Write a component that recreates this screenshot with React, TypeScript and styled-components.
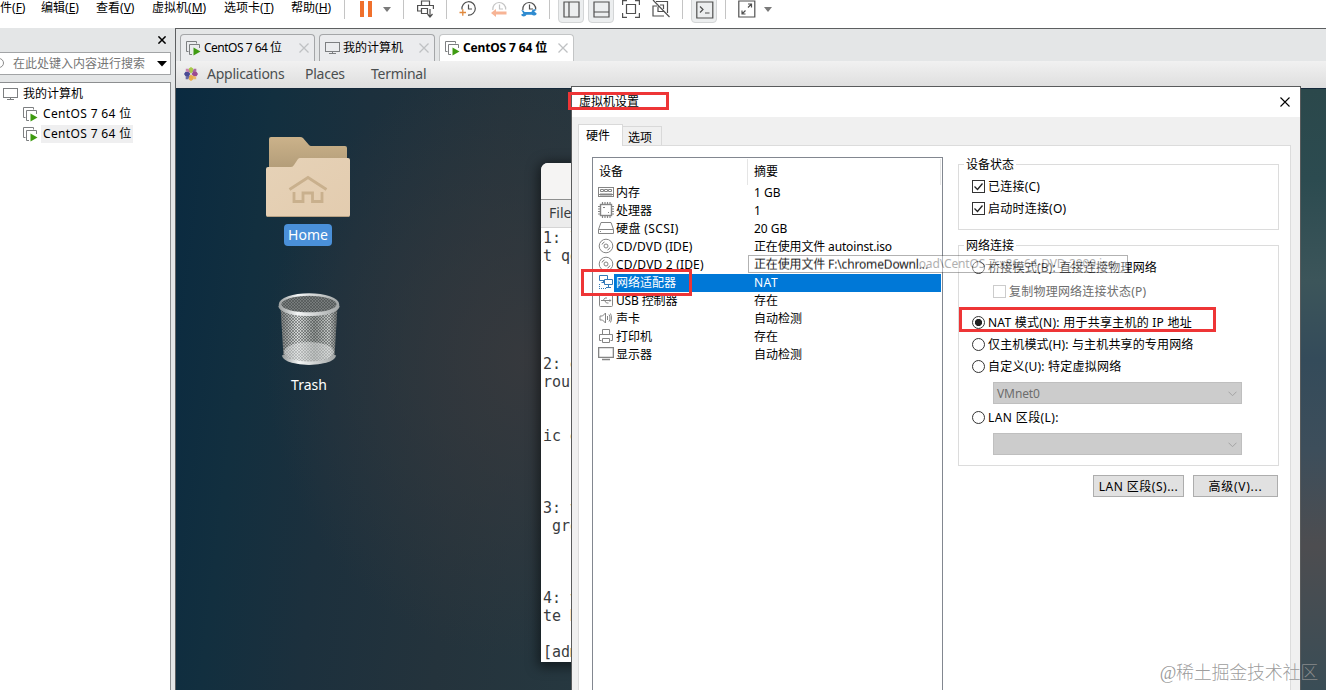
import React from "react";
import styled, { createGlobalStyle, css } from "styled-components";

const Global = createGlobalStyle`
  * { box-sizing: border-box; }
  body { margin: 0; background: #fff; overflow: hidden; }
  svg { display: block; flex: none; }
`;

const ui = `"Noto Sans", "Noto Sans CJK SC", sans-serif`;

const Screen = styled.div`
  position: relative;
  width: 1326px;
  height: 690px;
  overflow: hidden;
  display: flex;
  flex-direction: column;
  font: 12px/18px ${ui};
  color: #000;
  white-space: nowrap;
`;

const Fit = styled.span<{ $w?: number; $ls?: number }>`
  display: inline-block;
  flex: none;
  white-space: pre;
  ${(p) => p.$w && css`width: ${p.$w}px;`}
  letter-spacing: ${(p) => p.$ls ?? 0}px;
`;

/* ---------- top bar ---------- */
const TopBar = styled.header`
  height: 28px;
  flex: none;
  display: flex;
  background: #fff;
`;
const Menu = styled.nav`
  display: flex;
  gap: 16px;
  width: 331px;
  height: 16px;
  line-height: 16px;
  flex: none;
`;
const Tools = styled.div`
  display: flex;
  align-items: center;
  height: 18px;
`;
const Slot = styled.div<{ $ml: number }>`
  margin-left: ${(p) => p.$ml}px;
  flex: none;
`;
const Sep = styled.i<{ $ml: number }>`
  margin-left: ${(p) => p.$ml}px;
  width: 1px;
  height: 20px;
  background: #c4c4c4;
  flex: none;
`;
const Toggle = styled.div<{ $ml: number }>`
  margin: -8px 0 -5px ${(p) => p.$ml}px;
  width: 26px;
  height: 31px;
  padding: 8px 0 0 4px;
  border: 1px solid #d3d5d6;
  border-radius: 4px;
  background: #eceeef;
  flex: none;
`;

/* ---------- body ---------- */
const Body = styled.div`
  flex: 1;
  display: flex;
  min-height: 0;
  background: #e4e6e7;
`;
const Sidebar = styled.aside`
  width: 171px;
  margin-right: 4px;
  flex: none;
  display: flex;
  flex-direction: column;
`;
const SideHead = styled.div`
  height: 24px;
  display: flex;
  justify-content: flex-end;
  align-items: center;
  padding-right: 5px;
  flex: none;
`;
const Search = styled.div`
  height: 23px;
  border: 1px solid #a2a4a6;
  border-left: 0;
  background: #fff;
  display: flex;
  align-items: center;
  color: #757575;
  padding-right: 3px;
  flex: none;
  overflow: hidden;
`;
const SearchText = styled.span`
  margin-left: 8px;
  flex: 1;
`;
const Tree = styled.div`
  flex: 1;
  margin-top: 7px;
  padding-top: 1px;
  border: 1px solid #8c8e90;
  border-left: 0;
  border-bottom: 0;
  background: #fff;
`;
const TreeRow = styled.div<{ $indent: number }>`
  height: 20px;
  display: flex;
  align-items: center;
  gap: 3px;
  padding-left: ${(p) => p.$indent}px;
`;
const TreeLabel = styled.span<{ $hot?: boolean }>`
  padding: 0 1px 0 2px;
  height: 18px;
  background: ${(p) => (p.$hot ? "#efeff0" : "transparent")};
`;

const Console = styled.main`
  flex: 1;
  min-width: 0;
  border-top: 1px solid #5d5f61;
  border-left: 1px solid #5d5f61;
  display: flex;
  flex-direction: column;
`;
const Tabs = styled.div`
  height: 32px;
  padding: 5px 0 0 4px;
  display: flex;
  gap: 4px;
  flex: none;
`;
const Tab = styled.div<{ $w: number; $on?: boolean }>`
  width: ${(p) => p.$w}px;
  height: 27px;
  border: 1px solid ${(p) => (p.$on ? "#c3c5c6" : "#a4a6a8")};
  border-bottom: 0;
  border-radius: 4px 4px 0 0;
  background: ${(p) => (p.$on ? "#fff" : "#ebecee")};
  font-weight: ${(p) => (p.$on ? 700 : 400)};
  display: flex;
  align-items: center;
  gap: 3px;
  padding: 0 5px 0 5px;
`;
const TabText = styled.span<{ $ls: number }>`
  flex: 1;
  letter-spacing: ${(p) => p.$ls}px;
`;
const GuestBar = styled.div`
  height: 27px;
  flex: none;
  display: flex;
  align-items: center;
  padding: 0 0 2px 8px;
  background: linear-gradient(#f1f1f1, #dedede);
  font-size: 14px;
  color: #4b4f50;
`;
const GuestItem = styled.span<{ $w?: number; $ml?: number }>`
  flex: none;
  width: ${(p) => (p.$w ? p.$w + "px" : "auto")};
  margin-left: ${(p) => p.$ml ?? 0}px;
  letter-spacing: -0.25px;
`;
const Desktop = styled.div`
  position: relative;
  flex: 1;
  border-top: 1px solid #14283a;
  background:
    linear-gradient(180deg, #2b484b 0, #2c4b50 15%, #3c555a 32%, #344b5a 45%, #3d4e5b 60%, #4d4d50 76%, #3a4d56 100%) right / 30px 100% no-repeat,
    radial-gradient(ellipse 260px 300px at 350px 270px, rgba(55, 57, 61, 0.95), rgba(52, 56, 60, 0)),
    linear-gradient(97deg, #0a2a40 0%, #122f3f 8%, #1c303d 16%, #24333c 27%, #2a4046 60%, #36505a 100%);
`;
const DeskIcon = styled.div<{ $x: number; $y: number; $gap: number }>`
  position: absolute;
  left: ${(p) => p.$x}px;
  top: ${(p) => p.$y}px;
  width: 100px;
  display: flex;
  flex-direction: column;
  align-items: center;
  gap: ${(p) => p.$gap}px;
`;
const DeskLabel = styled.span<{ $on?: boolean }>`
  height: 22px;
  padding: 0 4px 0 4px;
  border-radius: 4px;
  font-size: 14px;
  line-height: 21px;
  color: #fff;
  background: ${(p) => (p.$on ? "#4a90d9" : "transparent")};
`;
const Terminal = styled.section`
  position: absolute;
  left: 365px;
  top: 74px;
  width: 60px;
  height: 499px;
  background: #fff;
  border-radius: 7px 0 0 0;
  overflow: hidden;
  box-shadow: 0 2px 12px 3px rgba(0, 0, 0, 0.5);
  color: #3a3d3f;
`;
const TermTitle = styled.div`
  height: 37px;
  background: #f5f4f3;
  border-bottom: 1px solid #8e8f8f;
`;
const TermMenu = styled.div`
  height: 28px;
  padding: 3px 0 0 8px;
  border-bottom: 1px solid #d5d5d5;
  background: #ececec;
  font-size: 14px;
  line-height: 20px;
`;
const TermText = styled.pre`
  margin: 0;
  padding: 1px 0 0 2px;
  font: 15px/18px "DejaVu Sans Mono", monospace;
`;

/* ---------- dialog ---------- */
const Dialog = styled.section`
  position: absolute;
  left: 571px;
  top: 86px;
  width: 730px;
  height: 620px;
  border: 1px solid #595b5c;
  background: #f0f0f0;
  display: flex;
  flex-direction: column;
`;
const TitleBar = styled.div`
  height: 30px;
  flex: none;
  background: #fff;
  display: flex;
  align-items: center;
  justify-content: space-between;
  padding: 0 10px 1px 7px;
`;
const DlgTabs = styled.div`
  display: flex;
  align-items: flex-end;
  height: 28px;
  padding-left: 6px;
  flex: none;
`;
const DlgTab = styled.div<{ $on?: boolean }>`
  width: ${(p) => (p.$on ? 45 : 39)}px;
  height: ${(p) => (p.$on ? 22 : 19)}px;
  margin-bottom: ${(p) => (p.$on ? -1 : 0)}px;
  position: relative;
  z-index: ${(p) => (p.$on ? 1 : 0)};
  border: 1px solid #d9d9d9;
  border-bottom: 0;
  border-left-width: ${(p) => (p.$on ? 1 : 0)}px;
  background: ${(p) => (p.$on ? "#fff" : "#f0f0f0")};
  padding-left: ${(p) => (p.$on ? 7 : 5)}px;
  line-height: 21px;
`;
const Pane = styled.div`
  flex: 1;
  margin: 0 9px 0 6px;
  border: 1px solid #dcdcdc;
  background: #fff;
  padding: 11px 11px 0 13px;
  display: flex;
  gap: 15px;
`;
const List = styled.div`
  width: 351px;
  border: 1px solid #828790;
  padding-right: 1px;
  flex: none;
`;
const HeadRow = styled.div`
  height: 25px;
  margin-top: 1px;
  display: grid;
  grid-template-columns: 155px 1fr;
  line-height: 26px;
`;
const HeadCell = styled.div`
  padding-left: 6px;
  border-right: 1px solid #e5e5e5;
`;
const Row = styled.div`
  height: 18px;
  display: grid;
  grid-template-columns: 21px 140px 1fr;
`;
const IconCell = styled.div`
  padding-left: 5px;
`;
const Cell = styled.div<{ $on?: boolean; $ls: number; $pl: number }>`
  padding-left: ${(p) => p.$pl}px;
  height: 18px;
  letter-spacing: ${(p) => p.$ls}px;
  background: ${(p) => (p.$on ? "#0078d7" : "transparent")};
  color: ${(p) => (p.$on ? "#fff" : "#000")};
`;
const Side = styled.div`
  flex: 1;
  padding-top: 7px;
  display: flex;
  flex-direction: column;
`;
const Group = styled.div<{ $h: number }>`
  margin: 0 0 15px;
  height: ${(p) => p.$h}px;
  border: 1px solid #dcdcdc;
  padding: 0 0 0 13px;
  display: flex;
  flex-direction: column;
`;
const Legend = styled.div`
  align-self: flex-start;
  height: 18px;
  margin: -9px 0 0 -8px;
  padding: 0 2px;
  background: #fff;
`;
const Option = styled.label<{ $mt: number; $ml?: number; $off?: boolean; $ls?: number }>`
  display: flex;
  align-items: center;
  gap: 3px;
  height: 18px;
  flex: none;
  margin: ${(p) => p.$mt}px 0 0 ${(p) => p.$ml ?? 0}px;
  color: ${(p) => (p.$off ? "#6d6d6d" : "#000")};
  letter-spacing: ${(p) => p.$ls ?? 0.22}px;
`;
const Check = styled.i<{ $off?: boolean }>`
  width: 13px;
  height: 13px;
  margin-bottom: 1px;
  border: 1px solid ${(p) => (p.$off ? "#ccc" : "#333")};
  background: #fff;
`;
const Radio = styled.i<{ $on?: boolean }>`
  width: 13px;
  height: 13px;
  margin-bottom: 1px;
  border: 1px solid #333;
  border-radius: 50%;
  background: ${(p) => (p.$on ? "radial-gradient(circle, #222 0 3.2px, #fff 4px)" : "#fff")};
`;
const Combo = styled.div<{ $mt: number }>`
  margin: ${(p) => p.$mt}px 0 0 21px;
  width: 249px;
  height: 22px;
  flex: none;
  border: 1px solid #bfbfbf;
  background: #ccc;
  color: #6d6d6d;
  padding: 1px 4px 0 3px;
  letter-spacing: -0.1px;
  display: flex;
  align-items: center;
  justify-content: space-between;
`;
const Buttons = styled.div`
  display: flex;
  justify-content: flex-end;
  gap: 9px;
  margin: -6px 1px 0 0;
`;
const Button = styled.div<{ $w: number; $ls: number }>`
  width: ${(p) => p.$w}px;
  height: 22px;
  border: 1px solid #adadad;
  background: #e1e1e1;
  text-align: center;
  line-height: 21px;
  letter-spacing: ${(p) => p.$ls}px;
`;
const Tooltip = styled.div`
  position: absolute;
  left: 748px;
  top: 255px;
  width: 380px;
  height: 18px;
  border: 1px solid #4a4a4a;
  padding-left: 5px;
  background: #fff;
  color: #444;
  line-height: 16px;
  letter-spacing: -0.15px;
  opacity: 0.42;
`;
const Mark = styled.div<{ $x: number; $y: number; $w: number; $h: number }>`
  position: absolute;
  left: ${(p) => p.$x}px;
  top: ${(p) => p.$y}px;
  width: ${(p) => p.$w}px;
  height: ${(p) => p.$h}px;
  border: 3px solid #ee3536;
`;
const Watermark = styled.div`
  position: absolute;
  right: 8px;
  bottom: 4px;
  font: 300 18px/26px "Liberation Serif", "Noto Sans CJK SC", sans-serif;
  letter-spacing: -0.25px;
  color: rgba(145, 145, 145, 0.9);
`;

/* ---------- icons ---------- */
const Cross = ({ s, c, w }: { s: number; c: string; w: number }) => (
  <svg width={s} height={s} viewBox="0 0 10 10" stroke={c} strokeWidth={w} fill="none">
    <path d="M.5.5l9 9M9.500.5l-9 9" />
  </svg>
);
const Caret = ({ c = "#7a7a7a" }: { c?: string }) => (
  <svg width="8" height="5" viewBox="0 0 8 5"><path d="M0 0h8L4 5z" fill={c} /></svg>
);
const Chevron = () => (
  <svg width="9" height="6" viewBox="0 0 9 6" fill="none" stroke="#a3a3a3"><path d="M.5.7l4 4 4-4" /></svg>
);
const PcIcon = () => (
  <svg width="15" height="14" viewBox="0 0 15 14" fill="none" stroke="#7d7f81">
    <rect x=".5" y="1.500" width="14" height="9" /><path d="M7.500 11v2M4 12.500h7" />
  </svg>
);
const VmIcon = () => (
  <svg width="15" height="15" viewBox="0 0 15 15" fill="none" stroke="#7d7f81">
    <path d="M2.500 10.500h-2v-10h10v2" />
    <path d="M6 13.500H3.500v-10h10V7" />
    <path d="M7.500 6.500L14.500 10.500l-7 4z" fill="#3f9b12" stroke="none" />
  </svg>
);
const Tick = () => (
  <svg width="11" height="11" viewBox="0 0 11 11" fill="none" stroke="#222" strokeWidth="1.300"><path d="M1.500 5.500l3 3 5-6" /></svg>
);
const Clock = ({ kind }: { kind: "add" | "back" | "set" }) => (
  <svg width="18" height="18" viewBox="0 0 18 18" fill="none">
    <g stroke={kind === "back" ? "#c4c4c4" : "#505050"} strokeWidth="1.200">
      {kind === "add" ? <path d="M3 9.500a6.700 6.700 0 1 1 6 5.600" /> : <path d="M2.800 10a6.500 6.500 0 1 1 12.900-.5" />}
      <path d="M9.500 4.500V9H13" />
    </g>
    {kind === "add" && <path d="M.5 12.500H7M3.800 9.200v6.600" stroke="#e0883c" strokeWidth="1.300" />}
    {kind === "back" && <path d="M1 13l5-4v2.500h10.500v3H6V17z" fill="#f7b495" />}
    {kind === "set" && <path d="M1.200 9.800l3 1.200v1h7.300a3 3 0 0 1 5-2l-2.300 1.300 2.600 2.500a3.200 3.200 0 0 1-5 1H6.500a3 3 0 0 1-5.500 0l2.300-1.300z" fill="#2f8bd0" />}
  </svg>
);
const Frame = ({ children }: { children: React.ReactNode }) => (
  <svg width="18" height="18" viewBox="0 0 18 18" fill="none" stroke="#505050" strokeWidth="1.200">{children}</svg>
);
const CentLogo = () => (
  <svg width="14" height="14" viewBox="0 0 14 14">
    {["#a9c94a", "#9a4a90", "#e8ad4a", "#4a4a94"].map((c, i) => (
      <g key={c} transform={`rotate(${i * 90} 7 7)`}>
        <path d="M4.800 4.600V1.500L7 0l2.200 1.500v3.100L7 6.400z" fill={c} />
        <path d="M9.700 1.800h2.600v2.600L9 6.200 8.500 5z" fill={["#9a4a90", "#e8ad4a", "#4a4a94", "#c06a9c"][i]} opacity=".8" />
      </g>
    ))}
  </svg>
);

const Device = ({ kind }: { kind: string }) => {
  const shapes: Record<string, React.ReactNode> = {
    ram: <><rect x=".5" y="3.500" width="15" height="9" /><path d="M2.500 5.500h3v2h-3zM6.500 5.500h3v2h-3zM10.500 5.500h3v2h-3zM1 10.500h14M3 9v3M5 9v3M7 9v3M9 9v3M11 9v3M13 9v3" /></>,
    cpu: <><rect x="2.500" y="2.500" width="11" height="11" strokeWidth="1.400" /><path d="M4.500 0v2M7 0v2M9.500 0v2M12 0v2M4.500 14v2M7 14v2M9.500 14v2M12 14v2M0 4.500h2M0 7h2M0 9.500h2M0 12h2M14 4.500h2M14 7h2M14 9.500h2M14 12h2M5 5.500h2M10 10.500h1" strokeWidth="1.200" /></>,
    disk: <><path d="M.5 9.500L3 2.500h10l2.500 7v4H.5zM.5 9.500h15M2 11.500h1" /></>,
    cd: <><circle cx="8" cy="8" r="6.800" /><circle cx="8" cy="8" r="2" /><path d="M4 6.500A4.500 4.500 0 0 1 6.500 4M12 9.500A4.500 4.500 0 0 1 9.500 12" /></>,
    net: <g stroke="#3479b8"><path d="M1.500 1.500h8v5h-8z" fill="#fff" /><path d="M5.500 7v2M3.500 8.500h3" /><path d="M6.500 5.500h8v5h-8z" fill="#fff" /><path d="M10.500 11v2M8 13.500h5" /><path d="M1 14.500h8M1.500 10v4" strokeDasharray="1 1" /></g>,
    usb: <><rect x="1.500" y="2.500" width="13" height="12" rx="1" /><path d="M3 8.500h9M5 8.500l2-2.500h2M6.500 8.500l2 2.500h2" /><path d="M11.500 7l2 1.500-2 1.500z" fill="#858585" stroke="none" /></>,
    sound: <><path d="M2 6h2.500l3-3v10l-3-3H2zM9.500 6v4M11 4.500c1.300 2 1.300 5 0 7M12.500 3.500c1.300 3 1.300 6 0 9" /></>,
    print: <><path d="M4.500 6V1.500h7V6M3.500 12.500h-2v-6h13v6h-2M4.500 10.500h7v4h-7z" /></>,
    screen: <><path d="M.6 1.600h14.800v9.800H.6zM4 13.500h8" strokeWidth="1.400" /></>,
  };
  return <svg width="16" height="16" viewBox="0 0 16 16" fill="none" stroke="#858585">{shapes[kind]}</svg>;
};

const Folder = () => (
  <svg width="84" height="82" viewBox="0 0 84 82">
    <defs>
      <linearGradient id="fb" x1="0" y1="0" x2="0" y2="1"><stop offset="0" stopColor="#cbb28a" /><stop offset="1" stopColor="#b39d79" /></linearGradient>
      <linearGradient id="ff" x1="0" y1="0" x2="1" y2="1"><stop offset="0" stopColor="#e6d2b7" /><stop offset="1" stopColor="#e3ccaf" /></linearGradient>
    </defs>
    <path d="M3 32V3q0-2 2-2h29q2 0 3 1l6 7q1 1 2 1h34q2 0 2 2v20z" fill="url(#fb)" />
    <path d="M0 33q0-2 2-2h23q2 0 3-2l4-6q1-1 2-1h48q2 0 2 2v55q0 2-2 2H2q-2 0-2-2z" fill="url(#ff)" />
    <path d="M1 80.500h82" stroke="#b7a184" />
    <path d="M23.500 53.500l18.500-12 18.500 12M28 56v9.500h9V57h9.500v8.500H56V56" fill="none" stroke="#c9b08d" strokeWidth="2.800" />
  </svg>
);
const Trash = () => (
  <svg width="62" height="74" viewBox="0 0 62 74">
    <defs>
      <linearGradient id="body"><stop offset="0" stopColor="#777b7b" /><stop offset=".3" stopColor="#d9dcdb" /><stop offset=".6" stopColor="#8e9391" /><stop offset=".85" stopColor="#c5c9c7" /><stop offset="1" stopColor="#6a6e6e" /></linearGradient>
      <pattern id="mesh" width="3" height="3" patternUnits="userSpaceOnUse"><path d="M0 0l3 3M3 0L0 3" stroke="#3a3f3f" strokeWidth=".45" /></pattern>
      <linearGradient id="rim"><stop offset="0" stopColor="#9ea2a2" /><stop offset=".3" stopColor="#f4f6f6" /><stop offset="1" stopColor="#a4a8a8" /></linearGradient>
    </defs>
    <path d="M2.500 14l3 50c2 11 49 11 51 0l3-50z" fill="url(#body)" />
    <path d="M2.500 14l3 50c2 11 49 11 51 0l3-50z" fill="url(#mesh)" />
    <ellipse cx="31" cy="60" rx="25" ry="10" fill="#e8eaea" opacity=".5" />
    <path d="M5.500 63c3 11 48 11 51 0" fill="none" stroke="url(#rim)" strokeWidth="3.500" />
    <ellipse cx="31" cy="12.500" rx="29" ry="10" fill="#777c7c" stroke="url(#rim)" strokeWidth="2.500" />
    <ellipse cx="31" cy="12.500" rx="27.500" ry="8.500" fill="url(#mesh)" />
    <path d="M2 13.500c1 11.500 57 11.500 58 0" fill="none" stroke="url(#rim)" strokeWidth="3.600" />
  </svg>
);

/* ---------- data ---------- */
const menus: [string, string, number][] = [
  ["件", "F", 25], ["编辑", "E", 39], ["查看", "V", 40],
  ["虚拟机", "M", 56], ["选项卡", "T", 51], ["帮助", "H", 40],
];
const devices: [string, string, string, number, number][] = [
  ["ram", "内存", "1 GB", 0, 0],
  ["cpu", "处理器", "1", 0, 0],
  ["disk", "硬盘 (SCSI)", "20 GB", 0.4, 0],
  ["cd", "CD/DVD (IDE)", "正在使用文件 autoinst.iso", 0.1, -0.15],
  ["cd", "CD/DVD 2 (IDE)", "正在使用文件 F:\\chromeDownl...", 0.18, -0.15],
  ["net", "网络适配器", "NAT", 0, 0.5],
  ["usb", "USB 控制器", "存在", -0.15, 0],
  ["sound", "声卡", "自动检测", 0, 0],
  ["print", "打印机", "存在", 0, 0],
  ["screen", "显示器", "自动检测", 0, 0],
];
const output = [
  "1: lo", "t qdi", "", "", "", "", "", "2: en", "roup ", "", "", "ic en", "", "", "",
  "3: vi", " grou", "", "", "", "4: vi", "te DO", "", "[admi",
].join("\n");

export default function App() {
  return (
    <Screen>
      <Global />
      <TopBar>
        <Menu>
          {menus.map(([t, k, w]) => (
            <Fit key={k} $w={w}>{t}(<u>{k}</u>)</Fit>
          ))}
        </Menu>
        <Tools>
          <Sep $ml={13} />
          <Slot $ml={15}><svg width="12" height="18" viewBox="0 0 12 18"><path d="M0 1h4v16H0zM8 1h4v16H8z" fill="#f0702c" /></svg></Slot>
          <Slot $ml={11}><Caret /></Slot>
          <Sep $ml={12} />
          <Slot $ml={13}><Frame><path d="M4.500 5V1h8v4M4 11H.6V5.500h15.800V9M4.500 8.500h6v5h-6zM13 9v7.500M10.500 14l2.500 3 2.500-3" /></Frame></Slot>
          <Sep $ml={11} />
          <Slot $ml={12}><Clock kind="add" /></Slot>
          <Slot $ml={13}><Clock kind="back" /></Slot>
          <Slot $ml={12}><Clock kind="set" /></Slot>
          <Sep $ml={11} />
          <Toggle $ml={8}><Frame><path d="M1 1h15v15H1zM6 1v15" /></Frame></Toggle>
          <Toggle $ml={4}><Frame><path d="M1 1h15v15H1zM1 11h15" /></Frame></Toggle>
          <Slot $ml={8}><Frame><path d="M.6 5V.6H5M13 .6h4.400V5M17.400 13v4.400H13M5 17.400H.6V13M4.500 4.500h9v9h-9z" /></Frame></Slot>
          <Slot $ml={12}><Frame><path d="M4 1.500h11.500V13M12 16H1V6h4M6 6.500v5h6M8 5h3.500v4M1 0l16.500 17" /></Frame></Slot>
          <Sep $ml={12} />
          <Toggle $ml={8}><Frame><path d="M.8 1h16v16h-16zM4 5.500l3 3-3 3M9 12h4.500" /></Frame></Toggle>
          <Sep $ml={8} />
          <Slot $ml={12}><Frame><path d="M.8 1h16v16h-16zM10 4h3.500v3.500M7.500 14H4v-3.500M13.500 4L10 7.500M4 14l3.500-3.500" /></Frame></Slot>
          <Slot $ml={8}><Caret /></Slot>
        </Tools>
      </TopBar>

      <Body>
        <Sidebar>
          <SideHead><Cross s={8} c="#000" w={1.900} /></SideHead>
          <Search>
            <svg width="5" height="14" viewBox="0 0 5 14" fill="none" stroke="#8b8b8b"><circle cx="-1" cy="6" r="4.500" /></svg>
            <SearchText>在此处键入内容进行搜索</SearchText>
            <svg width="10" height="6" viewBox="0 0 10 6"><path d="M0 0h10L5 5.500z" /></svg>
          </Search>
          <Tree>
            <TreeRow $indent={3}><PcIcon /><TreeLabel>我的计算机</TreeLabel></TreeRow>
            <TreeRow $indent={23}><VmIcon /><TreeLabel><Fit $ls={0.35}>CentOS 7 64 位</Fit></TreeLabel></TreeRow>
            <TreeRow $indent={23}><VmIcon /><TreeLabel $hot><Fit $ls={0.35}>CentOS 7 64 位</Fit></TreeLabel></TreeRow>
          </Tree>
        </Sidebar>

        <Console>
          <Tabs>
            <Tab $w={135}><VmIcon /><TabText $ls={-0.500}>CentOS 7 64 位</TabText><Cross s={10} c="#bfc1c3" w={1.300} /></Tab>
            <Tab $w={116}><PcIcon /><TabText $ls={0}>我的计算机</TabText><Cross s={10} c="#bfc1c3" w={1.300} /></Tab>
            <Tab $w={135} $on><VmIcon /><TabText $ls={-0.150}>CentOS 7 64 位</TabText><Cross s={10} c="#bfc1c3" w={1.300} /></Tab>
          </Tabs>
          <GuestBar>
            <CentLogo />
            <GuestItem $w={98} $ml={9}>Applications</GuestItem>
            <GuestItem $w={66}>Places</GuestItem>
            <GuestItem>Terminal</GuestItem>
          </GuestBar>
          <Desktop>
            <DeskIcon $x={82} $y={47} $gap={6}>
              <Folder />
              <DeskLabel $on>Home</DeskLabel>
            </DeskIcon>
            <DeskIcon $x={83} $y={203} $gap={8}>
              <Trash />
              <DeskLabel>Trash</DeskLabel>
            </DeskIcon>
            <Terminal>
              <TermTitle />
              <TermMenu>File</TermMenu>
              <TermText>{output}</TermText>
            </Terminal>
          </Desktop>
        </Console>
      </Body>

      <Dialog>
        <TitleBar><span>虚拟机设置</span><Cross s={10} c="#000" w={1.100} /></TitleBar>
        <DlgTabs><DlgTab $on>硬件</DlgTab><DlgTab>选项</DlgTab></DlgTabs>
        <Pane>
          <List>
            <HeadRow><HeadCell>设备</HeadCell><HeadCell>摘要</HeadCell></HeadRow>
            {devices.map(([kind, name, info, nameLs, infoLs]) => {
              const on = kind === "net";
              return (
                <Row key={name}>
                  <IconCell><Device kind={kind} /></IconCell>
                  <Cell $on={on} $ls={nameLs} $pl={2}>{name}</Cell>
                  <Cell $on={on} $ls={infoLs} $pl={0}>{info}</Cell>
                </Row>
              );
            })}
          </List>
          <Side>
            <Group $h={66}>
              <Legend>设备状态</Legend>
              <Option $mt={4}><Check><Tick /></Check>已连接(C)</Option>
              <Option $mt={4}><Check><Tick /></Check>启动时连接(O)</Option>
            </Group>
            <Group $h={221}>
              <Legend>网络连接</Legend>
              <Option $mt={4}><Radio />桥接模式(B): 直接连接物理网络</Option>
              <Option $mt={6} $ml={21} $off><Check $off />复制物理网络连接状态(P)</Option>
              <Option $mt={13} $ls={0.25}><Radio $on />NAT 模式(N): 用于共享主机的 IP 地址</Option>
              <Option $mt={4} $ls={0.15}><Radio />仅主机模式(H): 与主机共享的专用网络</Option>
              <Option $mt={4}><Radio />自定义(U): 特定虚拟网络</Option>
              <Combo $mt={6}>VMnet0<Chevron /></Combo>
              <Option $mt={5} $ls={0.4}><Radio />LAN 区段(L):</Option>
              <Combo $mt={6}><span /><Chevron /></Combo>
            </Group>
            <Buttons>
              <Button $w={91} $ls={0.5}>LAN 区段(S)...</Button>
              <Button $w={85} $ls={0.75}>高级(V)...</Button>
            </Buttons>
          </Side>
        </Pane>
      </Dialog>

      <Tooltip>正在使用文件 F:\chromeDownload\CentOS-7-x86_64-DVD-2009.iso</Tooltip>
      <Mark $x={568} $y={92} $w={101} $h={18} />
      <Mark $x={581} $y={269} $w={111} $h={27} />
      <Mark $x={959} $y={307} $w={257} $h={25} />
      <Watermark>@稀土掘金技术社区</Watermark>
    </Screen>
  );
}
